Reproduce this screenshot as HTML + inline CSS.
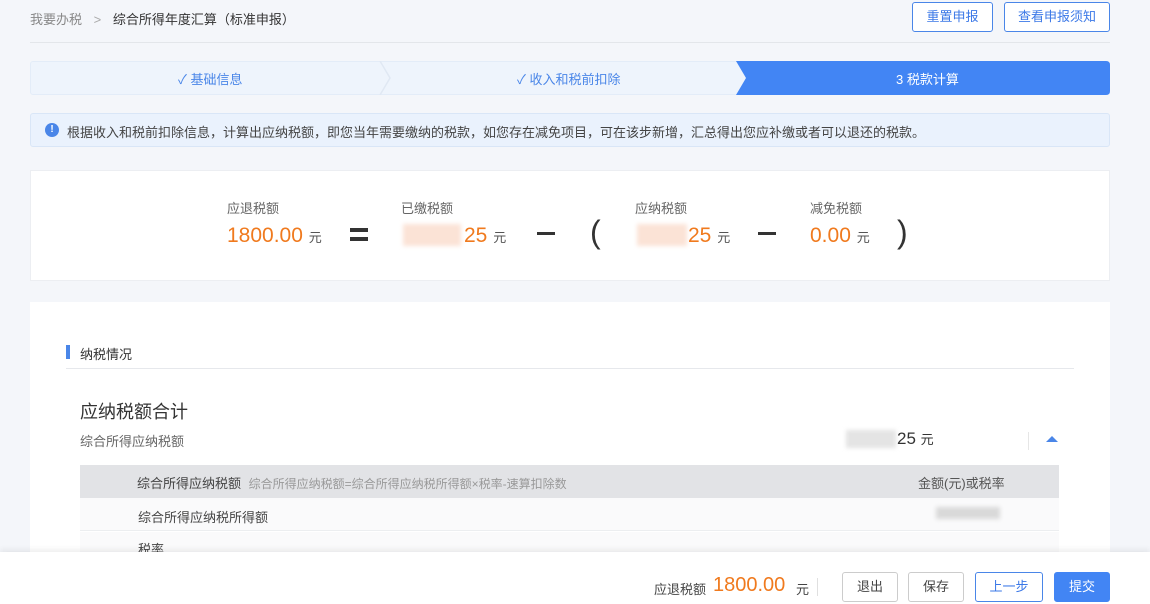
<!DOCTYPE html>
<html><head><meta charset="utf-8"><style>
*{margin:0;padding:0;box-sizing:border-box}
body{width:1150px;height:604px;overflow:hidden;background:#f4f6fa;font-family:"Liberation Sans","Noto Sans CJK SC",sans-serif;position:relative;color:#333}
.a{position:absolute;white-space:nowrap}
.btn{position:absolute;border:1px solid #4a86e8;border-radius:3px;color:#3b78e7;font-size:13px;text-align:center;background:#fff}
.or{color:#f07a1e}
.g{color:#666;font-size:13px}
.blur{position:absolute;background:#e4e4e4;filter:blur(2px)}
</style></head><body>
<div class="a" style="left:30px;top:9px;font-size:13px;color:#888">我要办税 <span style="margin:0 8px;color:#aaa">&gt;</span> <span style="color:#333">综合所得年度汇算（标准申报）</span></div>
<div class="btn" style="left:912px;top:2px;width:81px;height:30px;line-height:28px">重置申报</div>
<div class="btn" style="left:1004px;top:2px;width:106px;height:30px;line-height:28px">查看申报须知</div>
<div class="a" style="left:30px;top:42px;width:1080px;height:1px;background:#e3e6ea"></div>

<div class="a" style="left:30px;top:61px;width:1080px;height:34px;background:#eef4fc;border-radius:3px;border:1px solid #e3ecf8"></div>
<svg class="a" style="left:378px;top:61px" width="20" height="34"><path d="M2 0 L12 17 L2 34" fill="none" stroke="#e0e8f3" stroke-width="1.5"/></svg>
<div class="a" style="left:178px;top:69px;font-size:13px;color:#4a86e8">✓ 基础信息</div>
<div class="a" style="left:517px;top:69px;font-size:13px;color:#4a86e8">✓ 收入和税前扣除</div>
<svg class="a" style="left:736px;top:61px" width="374" height="34"><path d="M0 0 H370 Q374 0 374 4 V30 Q374 34 370 34 H0 L10 17 Z" fill="#4285f4"/></svg>
<div class="a" style="left:896px;top:69px;font-size:13px;color:#fff">3 税款计算</div>

<div class="a" style="left:30px;top:113px;width:1080px;height:34px;background:#eaf2fd;border:1px solid #d9e6f7;border-radius:3px"></div>
<div class="a" style="left:45px;top:123px;width:14px;height:14px;border-radius:50%;background:#4a86e8;color:#fff;font-size:10px;text-align:center;line-height:14px;font-weight:bold">!</div>
<div class="a" style="left:67px;top:122px;font-size:13px;color:#444">根据收入和税前扣除信息，计算出应纳税额，即您当年需要缴纳的税款，如您存在减免项目，可在该步新增，汇总得出您应补缴或者可以退还的税款。</div>

<div class="a" style="left:30px;top:170px;width:1080px;height:111px;background:#fff;border:1px solid #eceef2"></div>
<div class="a g" style="left:227px;top:198px">应退税额</div>
<div class="a or" style="left:227px;top:224px;font-size:21px">1800.00 <span style="font-size:13px;color:#555">元</span></div>
<div class="a" style="left:350px;top:228px;width:18px;height:4px;background:#333"></div>
<div class="a" style="left:350px;top:237px;width:18px;height:4px;background:#333"></div>
<div class="a g" style="left:401px;top:198px">已缴税额</div>
<div class="blur" style="left:403px;top:224px;width:58px;height:22px;background:#fbe3d6"></div>
<div class="a or" style="left:464px;top:224px;font-size:21px">25 <span style="font-size:13px;color:#555">元</span></div>
<div class="a" style="left:537px;top:232px;width:18px;height:3px;background:#333"></div>
<div class="a" style="left:590px;top:214px;font-size:32px;color:#333;font-weight:300">(</div>
<div class="a g" style="left:635px;top:198px">应纳税额</div>
<div class="blur" style="left:637px;top:224px;width:50px;height:22px;background:#fbe3d6"></div>
<div class="a or" style="left:688px;top:224px;font-size:21px">25 <span style="font-size:13px;color:#555">元</span></div>
<div class="a" style="left:758px;top:232px;width:18px;height:3px;background:#333"></div>
<div class="a g" style="left:810px;top:198px">减免税额</div>
<div class="a or" style="left:810px;top:224px;font-size:21px">0.00 <span style="font-size:13px;color:#555">元</span></div>
<div class="a" style="left:897px;top:214px;font-size:32px;color:#333">)</div>

<div class="a" style="left:30px;top:302px;width:1080px;height:260px;background:#fff"></div>
<div class="a" style="left:66px;top:345px;width:4px;height:14px;background:#4a86e8"></div>
<div class="a" style="left:80px;top:344px;font-size:13px;color:#333">纳税情况</div>
<div class="a" style="left:66px;top:368px;width:1008px;height:1px;background:#e6e8ec"></div>
<div class="a" style="left:80px;top:398px;font-size:18px;color:#333">应纳税额合计</div>
<div class="a" style="left:80px;top:431px;font-size:13px;color:#666">综合所得应纳税额</div>
<div class="blur" style="left:846px;top:430px;width:50px;height:18px"></div>
<div class="a" style="left:897px;top:429px;font-size:17px;color:#333">25 <span style="font-size:13px">元</span></div>
<div class="a" style="left:1028px;top:432px;width:1px;height:18px;background:#e6e6e6"></div>
<svg class="a" style="left:1045px;top:434px" width="14" height="9"><path d="M1 8 L7 2 L13 8Z" fill="#4a86e8"/></svg>
<div class="a" style="left:80px;top:465px;width:979px;height:33px;background:#e2e3e6"></div>
<div class="a" style="left:137px;top:473px;font-size:13px;color:#444">综合所得应纳税额 <span style="color:#999;font-size:12px;margin-left:4px">综合所得应纳税额=综合所得应纳税所得额×税率-速算扣除数</span></div>
<div class="a" style="left:918px;top:473px;font-size:13px;color:#555">金额(元)或税率</div>
<div class="a" style="left:80px;top:498px;width:979px;height:33px;background:#fafafb;border-bottom:1px solid #eceef0"></div>
<div class="a" style="left:138px;top:507px;font-size:13px;color:#444">综合所得应纳税所得额</div>
<div class="blur" style="left:936px;top:507px;width:64px;height:12px;background:#d9d9d9"></div>
<div class="a" style="left:80px;top:532px;width:979px;height:22px;background:#fafafb"></div>
<div class="a" style="left:138px;top:539px;font-size:13px;color:#444">税率</div>

<div class="a" style="left:0;top:552px;width:1150px;height:52px;background:#fff;box-shadow:0 -2px 6px rgba(0,0,0,0.08)"></div>
<div class="a" style="left:654px;top:579px;font-size:13px;color:#444">应退税额</div>
<div class="a or" style="left:713px;top:574px;font-size:20px">1800.00</div>
<div class="a" style="left:796px;top:579px;font-size:13px;color:#444">元</div>
<div class="a" style="left:817px;top:578px;width:1px;height:18px;background:#e0e0e0"></div>
<div class="btn" style="left:842px;top:572px;width:56px;height:30px;line-height:28px;border-color:#ccc;color:#444">退出</div>
<div class="btn" style="left:908px;top:572px;width:56px;height:30px;line-height:28px;border-color:#ccc;color:#444">保存</div>
<div class="btn" style="left:975px;top:572px;width:68px;height:30px;line-height:28px">上一步</div>
<div class="btn" style="left:1054px;top:572px;width:56px;height:30px;line-height:28px;background:#4285f4;border-color:#4285f4;color:#fff">提交</div>
</body></html>
